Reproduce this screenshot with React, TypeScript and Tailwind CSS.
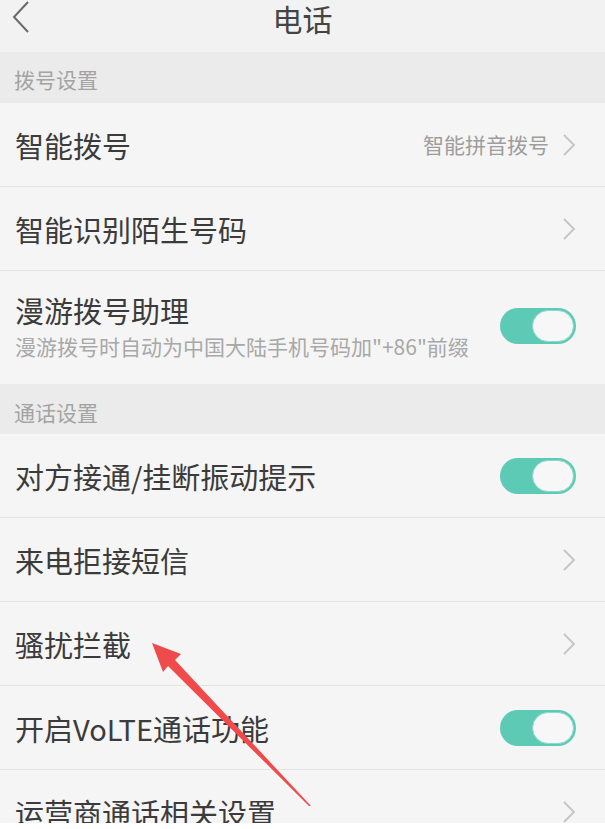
import { ReactNode } from 'react'

const font = { fontFamily: '"Noto Sans CJK SC", "Noto Sans", sans-serif' }

function Chevron() {
  return (
    <svg width="14" height="22" viewBox="0 0 14 22" className="shrink-0">
      <path d="M2 1 L12 11 L2 21" fill="none" stroke="#c4c4c4" strokeWidth="1.8" />
    </svg>
  )
}

function Toggle() {
  return (
    <div className="w-[76px] h-[36px] rounded-full bg-[#5ccab4] flex items-center justify-end p-[2px] shrink-0">
      <div className="w-[42px] h-[32px] rounded-full bg-[#f7f7f7] border border-[#8dd8c8]" />
    </div>
  )
}

function SectionHeader({ label, className = '' }: { label: string; className?: string }) {
  return (
    <div className={`bg-[#ebebeb] flex items-center pl-[14px] text-[21px] text-[#a3a3a3] ${className}`}>
      {label}
    </div>
  )
}

function Row({ title, right, sub, className = 'h-[84px]', last }: {
  title: string
  right: ReactNode
  sub?: string
  className?: string
  last?: boolean
}) {
  return (
    <div className={`flex items-center pl-[15px] pr-[29px] ${last ? '' : 'border-b border-[#e4e4e4]'} ${className}`}>
      <div className="flex-1 flex flex-col">
        <span className="text-[29px] leading-[36px] text-[#3b3b3b]">{title}</span>
        {sub && <span className="text-[21px] leading-[26px] text-[#a8a8a8] mt-[5px]">{sub}</span>}
      </div>
      {right}
    </div>
  )
}

export default function App() {
  return (
    <div className="w-[605px] h-[829px] bg-white overflow-hidden relative" style={font}>
      <div className="h-[823px] bg-[#f5f5f5] overflow-hidden">
        {/* Title bar */}
        <div className="h-[52px] bg-[#f2f2f2] relative flex items-start justify-center">
          <svg width="20" height="32" viewBox="0 0 20 32" className="absolute left-[11px] top-[1px]">
            <path d="M17 1 L3 16 L17 31" fill="none" stroke="#6a6a6a" strokeWidth="2" />
          </svg>
          <span className="text-[30px] leading-[36px] text-[#444] mt-[0px]">电话</span>
        </div>

        <SectionHeader label="拨号设置" className="h-[51px] pt-[4px]" />
        <Row
          title="智能拨号"
          right={
            <div className="flex items-center gap-[13px]">
              <span className="text-[21px] text-[#9d9d9d]">智能拼音拨号</span>
              <Chevron />
            </div>
          }
        />
        <Row title="智能识别陌生号码" right={<Chevron />} />
        <Row
          title="漫游拨号助理"
          sub={'漫游拨号时自动为中国大陆手机号码加"+86"前缀'}
          right={<Toggle />}
          className="h-[113px] pb-[4px]"
          last
        />

        <SectionHeader label="通话设置" className="h-[50px] pt-[8px]" />
        <Row title="对方接通/挂断振动提示" right={<Toggle />} />
        <Row title="来电拒接短信" right={<Chevron />} />
        <Row title="骚扰拦截" right={<Chevron />} />
        <Row title="开启VoLTE通话功能" right={<Toggle />} />
        <Row title="运营商通话相关设置" right={<Chevron />} last />
      </div>

      {/* red annotation arrow */}
      <svg width="605" height="829" viewBox="0 0 605 829" className="absolute inset-0 pointer-events-none">
        <polygon
          points="152,643 181,654 175,660 311,806 309,806 168,666 163,672"
          fill="#f04a4a"
        />
      </svg>
    </div>
  )
}
